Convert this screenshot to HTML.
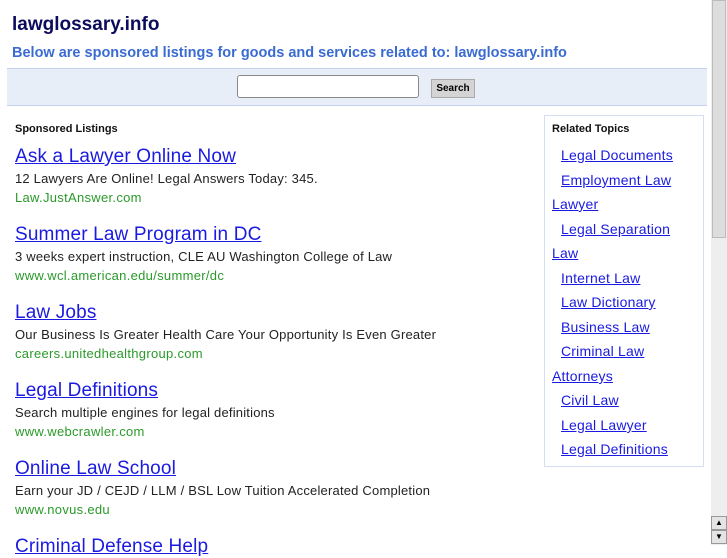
<!DOCTYPE html>
<html><head><style>
body{margin:0;width:727px;height:545px;overflow:hidden;background:#fff;font-family:"Liberation Sans",Arial,sans-serif;position:relative}
.t{position:absolute;left:12px;top:14px;font-size:19px;font-weight:bold;color:#0c0c5c}
.s{position:absolute;left:12px;top:45px;font-size:14.5px;font-weight:bold;color:#3a6bd1}
.band{position:absolute;left:7px;top:68px;width:700px;height:36px;background:#e8eef8;border-top:1px solid #c3d3ef;border-bottom:1px solid #c3d3ef}
.inp{position:absolute;left:237px;top:75px;width:180px;height:21px;border:1px solid #888;border-radius:3px;background:#fff}
.btn{position:absolute;left:431px;top:79px;width:44px;height:19px;background:#d4d4d4;border:1px solid #aaa;box-sizing:border-box;font-size:10px;font-weight:bold;text-align:center;line-height:17px;color:#000}
.sl{position:absolute;left:15px;top:123px;font-size:11px;font-weight:bold;color:#111}
.ad{position:absolute;left:15px}
.ad a{display:block;font-size:19px;color:#1a1ae0;text-decoration:underline;line-height:22px;letter-spacing:.15px}
.ad .d{font-size:13px;color:#222;margin-top:1px;line-height:19px;letter-spacing:.2px}
.ad .u{font-size:13px;color:#2a9a2a;line-height:19px;letter-spacing:.3px}
.box{position:absolute;left:544px;top:115px;width:160px;height:352px;border:1px solid #d3def3;box-sizing:border-box}
.rt{position:absolute;left:552px;top:123px;font-size:11px;font-weight:bold;color:#111}
.rl{position:absolute;font-size:14px;color:#1a1ae0;text-decoration:underline;letter-spacing:.2px}
.sb{position:absolute;left:711px;top:0;width:16px;height:545px;background:#eee}
.th{position:absolute;left:712px;top:0;width:14px;height:238px;background:#ddd;border:1px solid #bbb;box-sizing:border-box}
.ar{position:absolute;left:711px;width:16px;height:14px;background:#e4e4e4;border:1px solid #999;box-sizing:border-box;font-size:8px;text-align:center;line-height:12px}
</style></head><body>
<div class="t">lawglossary.info</div>
<div class="s">Below are sponsored listings for goods and services related to: lawglossary.info</div>
<div class="band"></div>
<div class="inp"></div>
<div class="btn">Search</div>
<div class="sl">Sponsored Listings</div>
<div class="ad" style="top:146px"><a>Ask a Lawyer Online Now</a><div class="d">12 Lawyers Are Online! Legal Answers Today: 345.</div><div class="u">Law.JustAnswer.com</div></div>
<div class="ad" style="top:224px"><a>Summer Law Program in DC</a><div class="d">3 weeks expert instruction, CLE AU Washington College of Law</div><div class="u">www.wcl.american.edu/summer/dc</div></div>
<div class="ad" style="top:302px"><a>Law Jobs</a><div class="d">Our Business Is Greater Health Care Your Opportunity Is Even Greater</div><div class="u">careers.unitedhealthgroup.com</div></div>
<div class="ad" style="top:380px"><a>Legal Definitions</a><div class="d">Search multiple engines for legal definitions</div><div class="u">www.webcrawler.com</div></div>
<div class="ad" style="top:458px"><a>Online Law School</a><div class="d">Earn your JD / CEJD / LLM / BSL Low Tuition Accelerated Completion</div><div class="u">www.novus.edu</div></div>
<div class="ad" style="top:536px"><a>Criminal Defense Help</a></div>
<div class="box"></div>
<div class="rt">Related Topics</div>
<a class="rl" style="left:561px;top:147px">Legal Documents</a>
<a class="rl" style="left:561px;top:172px">Employment Law</a>
<a class="rl" style="left:552px;top:196px">Lawyer</a>
<a class="rl" style="left:561px;top:221px">Legal Separation</a>
<a class="rl" style="left:552px;top:245px">Law</a>
<a class="rl" style="left:561px;top:270px">Internet Law</a>
<a class="rl" style="left:561px;top:294px">Law Dictionary</a>
<a class="rl" style="left:561px;top:319px">Business Law</a>
<a class="rl" style="left:561px;top:343px">Criminal Law</a>
<a class="rl" style="left:552px;top:368px">Attorneys</a>
<a class="rl" style="left:561px;top:392px">Civil Law</a>
<a class="rl" style="left:561px;top:417px">Legal Lawyer</a>
<a class="rl" style="left:561px;top:441px">Legal Definitions</a>
<div class="sb"></div>
<div class="th"></div>
<div class="ar" style="top:516px">▲</div>
<div class="ar" style="top:530px">▼</div>
</body></html>
